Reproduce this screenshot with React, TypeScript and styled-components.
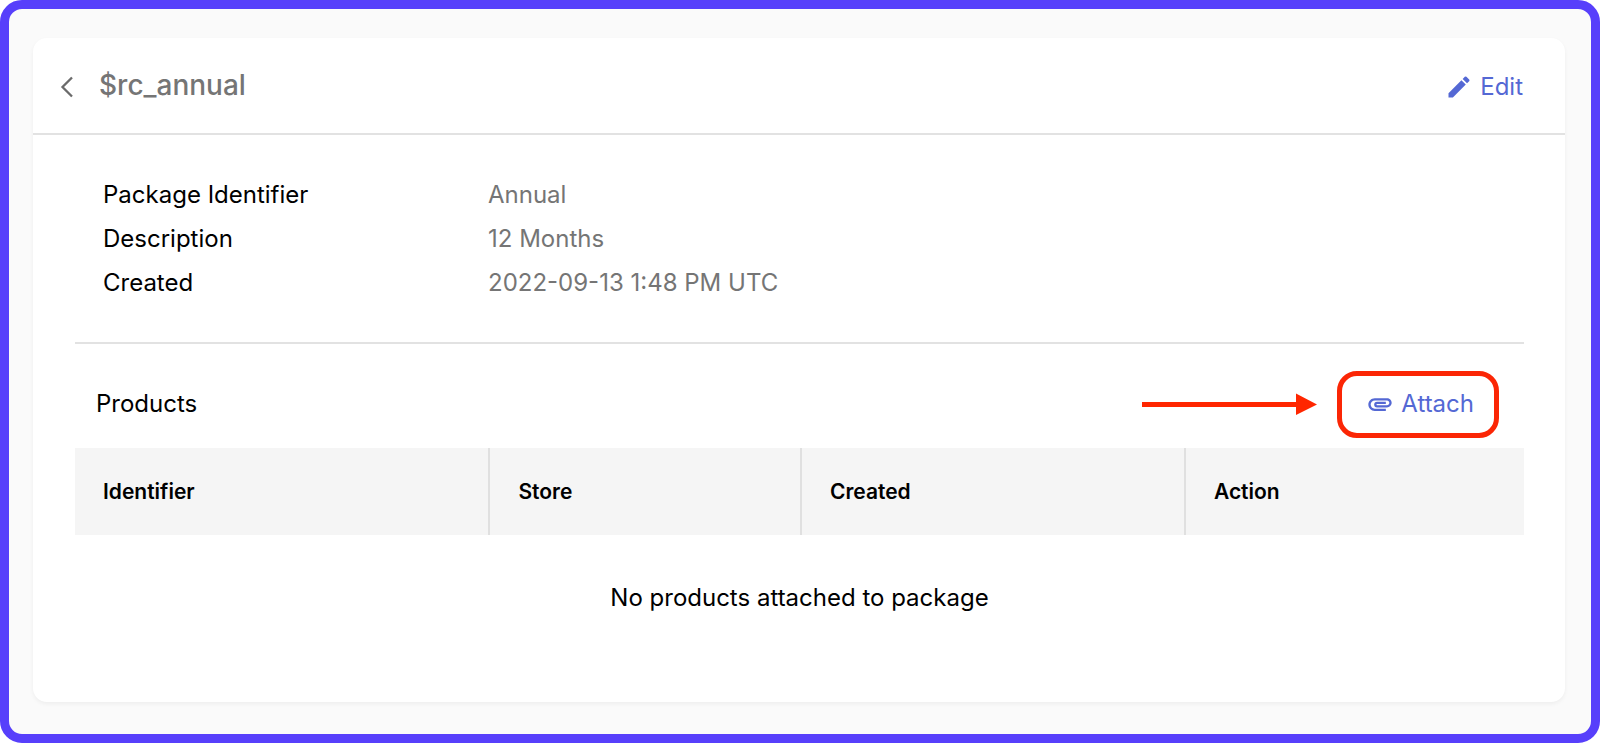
import React from "react";
import styled, { createGlobalStyle } from "styled-components";
import { MdAttachment, MdEdit } from "react-icons/md";

const GlobalStyle = createGlobalStyle`
  * {
    box-sizing: border-box;
  }

  body {
    margin: 0;
    background: #ffffff;
    color: #000000;
    font-family: Inter, "Liberation Sans", sans-serif;
    font-size: 24px;
    line-height: 44px;
  }
`;

const Frame = styled.main`
  display: flex;
  min-height: 100vh;
  padding: 29px 26px 32px 24px;
  border: 9px solid #573ffb;
  border-radius: 22px;
  background: #fafafa;
`;

const Card = styled.section`
  flex: 1;
  min-width: 0;
  border-radius: 14px;
  background: #ffffff;
  box-shadow: 0 2px 4px rgba(0, 0, 0, 0.05);
`;

const CardHeader = styled.header`
  display: flex;
  align-items: center;
  height: 97px;
  padding: 2px 42px 0 22px;
  border-bottom: 2px solid #e2e2e2;
`;

const Title = styled.h1`
  flex: 1;
  margin: 0 0 4px 20px;
  color: #757575;
  font-size: 28px;
  font-weight: 500;
  line-height: 36px;
`;

const PlainButton = styled.button`
  display: flex;
  align-items: center;
  padding: 0;
  border: 0;
  background: none;
  font: inherit;
  cursor: pointer;
`;

const BackButton = styled(PlainButton)`
  color: #6b6b6b;
`;

const ActionButton = styled(PlainButton)`
  gap: 7px;
  color: #5468d4;
`;

const HighlightedButton = styled(ActionButton)`
  height: 67px;
  padding: 0 20px 0 24px;
  border: 5px solid #fb2605;
  border-radius: 20px;
`;

const CardBody = styled.div`
  padding: 0 41px 0 42px;
`;

const Details = styled.dl`
  display: grid;
  grid-template-columns: 385px 1fr;
  margin: 0;
  padding: 38px 28px 37px;
  border-bottom: 2px solid #e2e2e2;
`;

const Term = styled.dt`
  margin: 0;
`;

const Value = styled.dd`
  margin: 0;
  color: #757575;
`;

const ProductsBar = styled.div`
  display: flex;
  align-items: center;
  height: 104px;
  padding: 16px 25px 0 21px;
`;

const ProductsTitle = styled.h2`
  flex: 1;
  margin: 0;
  font-size: 24px;
  font-weight: 400;
`;

const Pointer = styled.svg`
  display: block;
  margin-right: 20px;
`;

const ProductsTable = styled.table`
  width: 100%;
  border-collapse: collapse;
  table-layout: fixed;
`;

const HeadCell = styled.th<{ $share: string }>`
  width: ${(p) => p.$share};
  height: 87px;
  padding: 0 28px;
  background: #f5f5f5;
  font-size: 21px;
  font-weight: 600;
  text-align: left;

  & + & {
    border-left: 2px solid #e0e0e0;
  }
`;

const EmptyCell = styled.td`
  height: 126px;
  padding: 0;
  text-align: center;
`;

const details = [
  { term: "Package Identifier", value: "Annual" },
  { term: "Description", value: "12 Months" },
  { term: "Created", value: "2022-09-13 1:48 PM UTC" },
];

const columns = [
  { label: "Identifier", share: "28.6%" },
  { label: "Store", share: "21.5%" },
  { label: "Created", share: "26.5%" },
  { label: "Action", share: "23.4%" },
];

export default function App() {
  return (
    <>
      <GlobalStyle />
      <Frame>
        <Card>
          <CardHeader>
            <BackButton type="button" aria-label="Back">
              <svg width="24" height="24" viewBox="0 0 24 24" fill="none" stroke="currentColor" strokeWidth="2.3">
                <path d="M17 2.5 7.5 12 17 21.5" />
              </svg>
            </BackButton>
            <Title>$rc_annual</Title>
            <ActionButton type="button">
              <MdEdit size={28} aria-hidden />
              Edit
            </ActionButton>
          </CardHeader>
          <CardBody>
            <Details>
              {details.map((d) => (
                <React.Fragment key={d.term}>
                  <Term>{d.term}</Term>
                  <Value>{d.value}</Value>
                </React.Fragment>
              ))}
            </Details>
            <ProductsBar>
              <ProductsTitle>Products</ProductsTitle>
              <Pointer width="175" height="22" viewBox="0 0 175 22" fill="#ff2600" aria-hidden>
                <path d="M0 9h154V0.5l21 11-21 10.500v-8H0z" />
              </Pointer>
              <HighlightedButton type="button">
                <MdAttachment size={28} aria-hidden />
                Attach
              </HighlightedButton>
            </ProductsBar>
            <ProductsTable>
              <thead>
                <tr>
                  {columns.map((c) => (
                    <HeadCell key={c.label} scope="col" $share={c.share}>
                      {c.label}
                    </HeadCell>
                  ))}
                </tr>
              </thead>
              <tbody>
                <tr>
                  <EmptyCell colSpan={columns.length}>No products attached to package</EmptyCell>
                </tr>
              </tbody>
            </ProductsTable>
          </CardBody>
        </Card>
      </Frame>
    </>
  );
}
